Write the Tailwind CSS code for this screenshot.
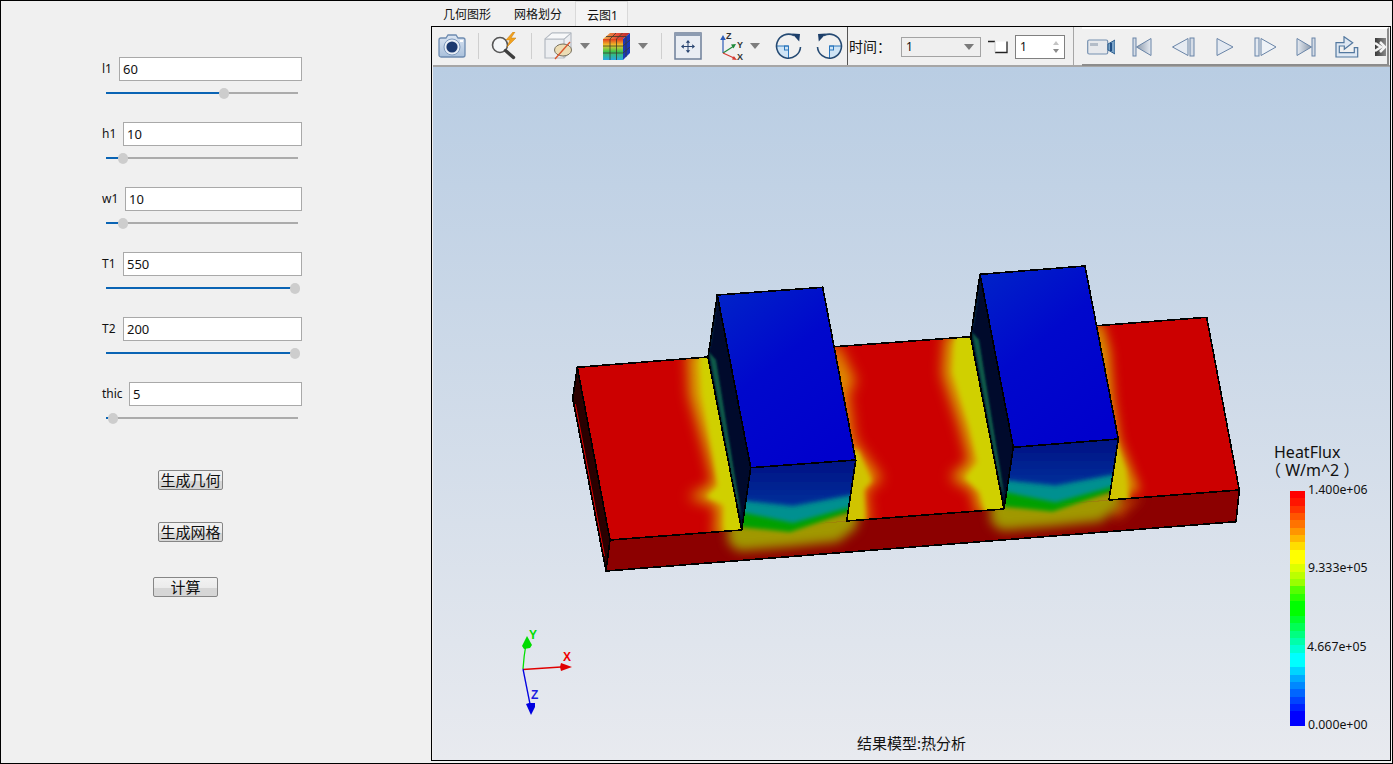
<!doctype html>
<html><head><meta charset="utf-8"><script src="https://cdn.jsdelivr.net/npm/@tailwindcss/browser@4"></script></head>
<body class="m-0 overflow-hidden">
<div class="flex w-[1393px] h-[764px] overflow-hidden bg-[#f0f0f0] border border-black font-['Noto_Sans','Noto_Sans_CJK_SC',sans-serif] text-[#111]">
  <!-- left panel -->
  <div class="w-[430px] shrink-0 pt-[56px] pl-[100px] flex flex-col items-start">
    <div class="h-[65px] w-[201px]">
      <div class="flex items-center h-6"><span class="text-[12px] w-[18px] pl-[1px]">l1</span><div class="flex-1 h-6 bg-white border border-[#a9a9a9] pl-[3px] text-[13px] leading-[22px]">60</div></div>
      <div class="flex items-center h-[10px] mt-[7px] ml-[5px] w-[192px]"><div class="h-[2px] w-[118px] bg-[#0a64b4]"></div><div class="w-[10px] h-[11px] -mx-[5px] rounded-full bg-[#cdcdcd] z-10"></div><div class="h-[2px] flex-1 bg-[#ababab]"></div></div>
    </div>
    <div class="h-[65px] w-[201px]">
      <div class="flex items-center h-6"><span class="text-[12px] w-[22px] pl-[1px]">h1</span><div class="flex-1 h-6 bg-white border border-[#a9a9a9] pl-[3px] text-[13px] leading-[22px]">10</div></div>
      <div class="flex items-center h-[10px] mt-[7px] ml-[5px] w-[192px]"><div class="h-[2px] w-[17px] bg-[#0a64b4]"></div><div class="w-[10px] h-[11px] -mx-[5px] rounded-full bg-[#cdcdcd] z-10"></div><div class="h-[2px] flex-1 bg-[#ababab]"></div></div>
    </div>
    <div class="h-[65px] w-[201px]">
      <div class="flex items-center h-6"><span class="text-[12px] w-[24px] pl-[1px]">w1</span><div class="flex-1 h-6 bg-white border border-[#a9a9a9] pl-[3px] text-[13px] leading-[22px]">10</div></div>
      <div class="flex items-center h-[10px] mt-[7px] ml-[5px] w-[192px]"><div class="h-[2px] w-[17px] bg-[#0a64b4]"></div><div class="w-[10px] h-[11px] -mx-[5px] rounded-full bg-[#cdcdcd] z-10"></div><div class="h-[2px] flex-1 bg-[#ababab]"></div></div>
    </div>
    <div class="h-[65px] w-[201px]">
      <div class="flex items-center h-6"><span class="text-[12px] w-[22px] pl-[1px]">T1</span><div class="flex-1 h-6 bg-white border border-[#a9a9a9] pl-[3px] text-[13px] leading-[22px]">550</div></div>
      <div class="flex items-center h-[10px] mt-[7px] ml-[5px] w-[192px]"><div class="h-[2px] w-[189px] bg-[#0a64b4]"></div><div class="w-[10px] h-[11px] -mx-[5px] rounded-full bg-[#cdcdcd] z-10"></div><div class="h-[2px] flex-1 bg-[#ababab]"></div></div>
    </div>
    <div class="h-[65px] w-[201px]">
      <div class="flex items-center h-6"><span class="text-[12px] w-[22px] pl-[1px]">T2</span><div class="flex-1 h-6 bg-white border border-[#a9a9a9] pl-[3px] text-[13px] leading-[22px]">200</div></div>
      <div class="flex items-center h-[10px] mt-[7px] ml-[5px] w-[192px]"><div class="h-[2px] w-[189px] bg-[#0a64b4]"></div><div class="w-[10px] h-[11px] -mx-[5px] rounded-full bg-[#cdcdcd] z-10"></div><div class="h-[2px] flex-1 bg-[#ababab]"></div></div>
    </div>
    <div class="h-[65px] w-[201px]">
      <div class="flex items-center h-6"><span class="text-[12px] w-[28px] pl-[1px]">thic</span><div class="flex-1 h-6 bg-white border border-[#a9a9a9] pl-[3px] text-[13px] leading-[22px]">5</div></div>
      <div class="flex items-center h-[10px] mt-[7px] ml-[5px] w-[192px]"><div class="h-[2px] w-[7px] bg-[#0a64b4]"></div><div class="w-[10px] h-[11px] -mx-[5px] rounded-full bg-[#cdcdcd] z-10"></div><div class="h-[2px] flex-1 bg-[#ababab]"></div></div>
    </div>
    <div class="mt-[23px] ml-[57px] w-[65px] h-[20px] border border-[#868686] rounded-[2px] bg-[linear-gradient(#f2f2f2_0%,#ebebeb_55%,#d6d6d6_55%,#d6d6d6_100%)] text-[15px] leading-[18px] text-center whitespace-nowrap">生成几何</div>
    <div class="mt-[32px] ml-[57px] w-[65px] h-[20px] border border-[#868686] rounded-[2px] bg-[linear-gradient(#f2f2f2_0%,#ebebeb_55%,#d6d6d6_55%,#d6d6d6_100%)] text-[15px] leading-[18px] text-center whitespace-nowrap">生成网格</div>
    <div class="mt-[35px] ml-[52px] w-[65px] h-[20px] border border-[#868686] rounded-[2px] bg-[linear-gradient(#f2f2f2_0%,#ebebeb_55%,#d6d6d6_55%,#d6d6d6_100%)] text-[15px] leading-[18px] text-center whitespace-nowrap">计算</div>
  </div>

  <!-- right panel -->
  <div class="flex-1 flex flex-col min-w-0 pr-[1px] pb-[2px]">
    <div class="h-[25px] flex items-end pl-[1px] text-[12px] shrink-0">
      <div class="w-[71px] pl-[11px] h-[24px] leading-[26px]">几何图形</div>
      <div class="w-[72px] pl-[11px] h-[24px] leading-[26px]">网格划分</div>
      <div class="w-[53px] h-[25px] pl-[11px] leading-[27px] border border-b-0 border-[#d9d9d9] bg-[#f4f4f4]">云图1</div>
    </div>
    <div class="flex-1 flex flex-col border border-black min-h-0 pl-[1px] bg-[#f0f0f0]">
      <!-- toolbar -->
      <div class="h-[40px] shrink-0 flex border-b-2 border-[#a6a6a6]">
        <div class="w-[415px] shrink-0 flex items-center border-r border-[#555]">
          <svg class="ml-[5px]" width="28" height="24" viewBox="0 0 28 24"><defs><linearGradient id="cam" x1="0" y1="0" x2="0" y2="1"><stop offset="0" stop-color="#dce6f3"/><stop offset="1" stop-color="#a9c0db"/></linearGradient></defs><path d="M3 4h5l2-3h8l2 3h5a2 2 0 0 1 2 2v15a2 2 0 0 1-2 2H3a2 2 0 0 1-2-2V6a2 2 0 0 1 2-2z" fill="url(#cam)" stroke="#6d8bb0" stroke-width="1.3"/><circle cx="14" cy="13" r="8" fill="#e9eff7" stroke="#7f9abd"/><circle cx="14" cy="13" r="5.6" fill="#1c3a70"/><rect x="22" y="6" width="3" height="2" fill="#fff"/></svg>
          <div class="ml-[12px] w-px h-[26px] bg-[#cfcfcf]"></div>
          <svg class="ml-[12px]" width="29" height="28" viewBox="0 0 29 28"><circle cx="9" cy="13" r="7.5" fill="#f4f6f8" stroke="#555" stroke-width="1.6"/><path d="M14.500 18.500l8 7" stroke="#3e3e3e" stroke-width="3.4" stroke-linecap="round"/><path d="M22 0l-7 8h4l-3 7 9-9h-5l4-6z" fill="#f2a21e" stroke="#c77d10" stroke-width=".5"/></svg>
          <div class="ml-[11px] w-px h-[26px] bg-[#cfcfcf]"></div>
          <svg class="ml-[12px]" width="28" height="30" viewBox="0 0 28 30"><path d="M1 8l7-6h19v18l-7 7H1z" fill="#eceef1" stroke="#b4bac2" stroke-width="1.2"/><path d="M1 8h19v19M20 8l7-6" fill="none" stroke="#b4bac2" stroke-width="1.2"/><path d="M1 8l7-6h19l-7 6z" fill="#f7f8f9" stroke="#b4bac2"/><ellipse cx="19" cy="19" rx="8.500" ry="6" fill="#ecdcb4" stroke="#77705c"/><path d="M11 28L26 11" stroke="#d9542b" stroke-width="1.3"/></svg>
          <svg class="ml-[8px]" width="10" height="6" viewBox="0 0 10 6"><path d="M0 0h10L5 6z" fill="#7d7d7d"/></svg>
          <svg class="ml-[13px]" width="27" height="30" viewBox="0 0 27 30"><defs><linearGradient id="rb" x1="0" y1="0" x2="0" y2="1"><stop offset="0" stop-color="#e33b1f"/><stop offset=".3" stop-color="#f0c92a"/><stop offset=".6" stop-color="#3cc450"/><stop offset="1" stop-color="#27a7e8"/></linearGradient><linearGradient id="rb2" x1="0" y1="0" x2="1" y2="0"><stop offset="0" stop-color="#e9b44a"/><stop offset=".5" stop-color="#e8503a"/><stop offset="1" stop-color="#b8272b"/></linearGradient></defs><path d="M0 8h20v21H0z" fill="url(#rb)"/><path d="M0 8l7-6h20l-7 6z" fill="url(#rb2)"/><path d="M20 8l7-6v20l-7 7z" fill="#1b39b8"/><path d="M7 8v21M13.500 8v21M0 15h20M0 22h20M7 8l6-6M13.500 8l6-6M3 5.500h20M23 5v21M20 15l7-6M20 22l7-6" stroke="#3c3c2c" stroke-width=".8" fill="none"/></svg>
          <svg class="ml-[8px]" width="10" height="6" viewBox="0 0 10 6"><path d="M0 0h10L5 6z" fill="#7d7d7d"/></svg>
          <div class="ml-[13px] w-px h-[26px] bg-[#cfcfcf]"></div>
          <svg class="ml-[12px]" width="28" height="28" viewBox="0 0 28 28"><rect x="1" y="1" width="26" height="26" fill="#e9edf3" stroke="#6e7f99" stroke-width="1.500"/><rect x="1" y="1" width="26" height="3" fill="#8d9cb2"/><path d="M14 10v9M9.500 14.500h9" stroke="#27436f" stroke-width="1"/><path d="M14 8l-2.200 2.800h4.400zM14 21l-2.200-2.800h4.400zM7 14.500l2.800-2.200v4.400zM21 14.500l-2.800-2.200v4.400z" fill="#27436f"/></svg>
          <svg class="ml-[16px]" width="28" height="30" viewBox="0 0 28 30"><path d="M5 22V8" stroke="#2c5cb8" stroke-width="1.200"/><path d="M5 4l-2.800 5h5.600z" fill="#2c5cb8"/><path d="M5 22l11-7" stroke="#1f8a3a" stroke-width="1.200"/><path d="M18 13l-5 0.500 2.500 4z" fill="#1f8a3a"/><path d="M5 22l11 5" stroke="#d63a32" stroke-width="1.200"/><path d="M19 29l-5-.5 1.800-3.500z" fill="#d63a32"/><text x="8" y="8" font-size="9" font-family="Liberation Sans" font-weight="700" fill="#333">Z</text><text x="19" y="17" font-size="9" font-family="Liberation Sans" font-weight="700" fill="#333">Y</text><text x="19" y="29" font-size="9" font-family="Liberation Sans" font-weight="700" fill="#333">X</text></svg>
          <svg class="ml-[4px]" width="10" height="6" viewBox="0 0 10 6"><path d="M0 0h10L5 6z" fill="#7d7d7d"/></svg>
          <svg class="ml-[15px]" width="27" height="28" viewBox="0 0 27 28"><path d="M1.500 14h12v12A12 12 0 0 1 1.500 14z" fill="#cfe4f5"/><rect x="9.500" y="14" width="4" height="4" fill="none" stroke="#2a76bd"/><path d="M1.500 14h12v12" fill="none" stroke="#2a76bd"/><path d="M19 3.500A12 12 0 1 0 25.500 15" fill="none" stroke="#254a73" stroke-width="1.600"/><path d="M17 1.500l8 .5-.8 7.500z" fill="#1d3f6a"/></svg>
          <svg class="ml-[14px] scale-x-[-1]" width="27" height="28" viewBox="0 0 27 28"><path d="M1.500 14h12v12A12 12 0 0 1 1.500 14z" fill="#cfe4f5"/><rect x="9.500" y="14" width="4" height="4" fill="none" stroke="#2a76bd"/><path d="M1.500 14h12v12" fill="none" stroke="#2a76bd"/><path d="M19 3.500A12 12 0 1 0 25.500 15" fill="none" stroke="#254a73" stroke-width="1.600"/><path d="M17 1.500l8 .5-.8 7.500z" fill="#1d3f6a"/></svg>
        </div>
        <div class="w-[226px] shrink-0 flex items-center border-r border-[#a6a6a6] pt-[2px]">
          <span class="ml-[1px] w-[36px] whitespace-nowrap text-[14px] leading-[20px]">时间：</span>
          <div class="ml-[16px] w-[80px] h-[20px] border border-[#a3a3a3] bg-[#efefef] flex items-center justify-between pl-[4px] pr-[6px] text-[12px]"><span>1</span><svg width="10" height="6" viewBox="0 0 10 6"><path d="M0 0h10L5 6z" fill="#7a7a7a"/></svg></div>
          <svg class="ml-[7px]" width="20" height="14" viewBox="0 0 20 14"><path d="M0 1.500h7" stroke="#222" stroke-width="1.500"/><path d="M7 1.500h12v12H7" fill="#fff" stroke="none"/><path d="M7 12.500h12V1.500" fill="none" stroke="#222" stroke-width="1.300"/><path d="M7 1.500v11" stroke="#ccc"/></svg>
          <div class="ml-[7px] w-[50px] h-[24px] bg-white border border-[#808080] flex items-center justify-between pl-[4px] pr-[5px] text-[12px]"><span>1</span><svg width="6" height="14" viewBox="0 0 6 14"><path d="M0 5l3-4 3 4z" fill="#c4c4c4"/><path d="M0 9l3 4 3-4z" fill="#8a8a8a"/></svg></div>
        </div>
        <div class="ml-[8px] w-[307px] shrink-0 flex items-center border-t-[2px] border-t-white border-r-2 border-r-[#8c8c8c] border-b-[2px] border-b-[#8c8c8c] -mb-[1px] h-[39px]">
          <svg class="ml-[5px]" width="28" height="16" viewBox="0 0 28 16"><rect x=".7" y="1" width="20" height="14" rx="1.500" fill="#e6e8ec" stroke="#7590b0" stroke-width="1.200"/><rect x="3" y="4" width="8" height="3" fill="#b3bcc8"/><path d="M21 5l7-4v14l-7-4z" fill="#7aa3c7" stroke="#2b5c8c"/><rect x="23" y="4" width="2" height="8" fill="#1f4e85"/></svg>
          <svg class="ml-[17px]" width="20" height="20" viewBox="0 0 20 20"><defs><linearGradient id="pg" x1="0" y1="0" x2="1" y2="0"><stop offset="0" stop-color="#8a98aa"/><stop offset="1" stop-color="#e6ebf2"/></linearGradient><linearGradient id="pg2" x1="0" y1="0" x2="1" y2="0"><stop offset="0" stop-color="#e6ebf2"/><stop offset="1" stop-color="#8a98aa"/></linearGradient></defs><rect x="1" y="1" width="3" height="18" fill="#d5dce6" stroke="#6984a7"/><path d="M19 1.500v17L4.500 10z" fill="url(#pg)" stroke="#6984a7"/></svg>
          <svg class="ml-[19px]" width="24" height="20" viewBox="0 0 24 20"><path d="M17 1.500v17L1.500 10z" fill="#e6ebf2" stroke="#6984a7"/><rect x="19" y="1" width="4" height="18" fill="#d5dce6" stroke="#6984a7"/></svg>
          <svg class="ml-[21px]" width="18" height="20" viewBox="0 0 18 20"><path d="M1 1.500v17L17 10z" fill="#e3e9f1" stroke="#6984a7"/></svg>
          <svg class="ml-[20px]" width="23" height="20" viewBox="0 0 23 20"><rect x="1" y="1" width="4" height="18" fill="#e3e9f1" stroke="#6984a7"/><path d="M7 1.500v17L22 10z" fill="#eef2f7" stroke="#6984a7"/></svg>
          <svg class="ml-[19px]" width="20" height="20" viewBox="0 0 20 20"><path d="M1 1.500v17L15.500 10z" fill="url(#pg2)" stroke="#6984a7"/><rect x="16" y="1" width="3" height="18" fill="#d5dce6" stroke="#6984a7"/></svg>
          <svg class="ml-[19px]" width="24" height="22" viewBox="0 0 24 22"><path d="M1 21V6.700h8V.7l8.700 6-8.400 6.600V10h-5v6.700h15v-5h3.400V21z" fill="#dfe8f3" stroke="#53789f" stroke-width="1.200"/></svg>
          <svg class="ml-[16px]" width="11" height="18" viewBox="0 0 11 18"><defs><linearGradient id="ov" x1="0" y1="0" x2="1" y2="0"><stop offset="0" stop-color="#3a3a3a"/><stop offset="1" stop-color="#8a8a8a"/></linearGradient></defs><rect width="11" height="18" fill="url(#ov)"/><path d="M0 5l6 4-6 4M5 4l5 5-5 5" fill="none" stroke="#f4f4f4" stroke-width="2.500"/></svg>
        </div>
      </div>
      <!-- canvas -->
      <div class="relative flex-1 min-h-0 bg-[linear-gradient(#b9cde3,#e8eaef)] overflow-hidden">
        <svg class="absolute left-0 top-0" width="957" height="693" viewBox="433 67 957 693">
          <defs>
            <filter id="b7" x="-60%" y="-30%" width="220%" height="160%"><feGaussianBlur stdDeviation="7"/></filter>
            <filter id="b5" x="-30%" y="-60%" width="160%" height="220%"><feGaussianBlur stdDeviation="5.500"/></filter>
            <filter id="b3" x="-60%" y="-30%" width="220%" height="160%"><feGaussianBlur stdDeviation="2.500"/></filter>
            <filter id="b2" x="-30%" y="-30%" width="160%" height="160%"><feGaussianBlur stdDeviation="2"/></filter>
            <filter id="b1" x="-50%" y="-10%" width="200%" height="120%"><feGaussianBlur stdDeviation="1.200"/></filter>
            <linearGradient id="topb" x1="0.1" y1="0" x2="0.7" y2="1"><stop offset="0" stop-color="#0022c8"/><stop offset=".45" stop-color="#0008cc"/><stop offset="1" stop-color="#0000cc"/></linearGradient>
            <linearGradient id="navy" x1="0" y1="0" x2="0" y2="1"><stop offset="0" stop-color="#000a80"/><stop offset="1" stop-color="#00309a"/></linearGradient>
            <clipPath id="cL"><polygon points="577.300,367.300 708,357 741.700,530 610,540"/></clipPath>
            <clipPath id="cM"><polygon points="835,346.700 970.700,336.700 1004,509 846.700,521"/></clipPath>
            <clipPath id="cR"><polygon points="1096.700,325.700 1206.700,317.300 1239.300,490 1109,500"/></clipPath>
            <clipPath id="cF"><polygon points="610,540 1239.300,490 1236,521.700 606,571"/><polygon points="750.700,467.700 855.700,460 846.700,521 741.700,530"/><polygon points="1013.300,447.300 1118.300,439 1109,500 1004,509"/></clipPath>
            <clipPath id="cW1"><polygon points="717.300,295 708,357 741.700,530 750.700,467.700"/></clipPath>
            <clipPath id="cW2"><polygon points="980,274.300 970.700,336.700 1004,509 1013.300,447.300"/></clipPath>
            <g id="chev">
              <polygon filter="url(#b5)" fill="#a09800" points="728,520 860,506 856,528 838,542 790,547 738,551 728,542"/>
              <polygon filter="url(#b2)" fill="#00a000" points="738,495 858,482 858,509 790,532 740,527"/>
              <polygon filter="url(#b2)" fill="#009090" points="738,480 858,470 858,505 793,523 740,512"/>
              <polygon filter="url(#b2)" fill="url(#navy)" points="738,455 862,450 862,493 793,506 738,500"/>
            </g>
          </defs>
          <!-- side sliver -->
          <polygon points="577.300,367.300 572.700,398.300 606,571 610,540" fill="#2a0000"/>
          <line x1="575.300" y1="404" x2="604.500" y2="556" stroke="#e00000" stroke-width="1"/>
          <!-- top faces -->
          <polygon points="577.300,367.300 708,357 741.700,530 610,540" fill="#cc0000"/>
          <polygon points="835,346.700 970.700,336.700 1004,509 846.700,521" fill="#cc0000"/>
          <polygon points="1096.700,325.700 1206.700,317.300 1239.300,490 1109,500" fill="#cc0000"/>
          <g clip-path="url(#cL)">
            <polygon filter="url(#b7)" fill="#d8b000" points="688,350 720,350 750,535 715,540 717,505 688,497 714,484 707,455 690,395"/>
            <polygon filter="url(#b3)" fill="#d0d000" points="699,350 722,350 752,538 724,542 724,505 706,497 718,486 713,455 702,395"/>
          </g>
          <g clip-path="url(#cM)">
            <polygon filter="url(#b7)" fill="#e09000" points="828,345 838,345 856,382 848,392 854,440 882,479 866,490 870,525 840,525"/>
            <polygon filter="url(#b3)" fill="#d0c400" points="848,450 858,450 872,481 864,490 866,525 842,525"/>
            <polygon filter="url(#b7)" fill="#d8b000" points="946,334 980,330 1012,515 978,515 973,490 950,477 970,462 961,428 943,374"/>
            <polygon filter="url(#b3)" fill="#d0d000" points="955,334 980,330 1012,515 986,515 980,492 965,478 978,462 970,428 953,372"/>
          </g>
          <g clip-path="url(#cR)">
            <polygon filter="url(#b5)" fill="#d89000" points="1090,326 1102,322 1110,350 1114,400 1120,440 1130,465 1140,490 1105,505"/>
            <polygon filter="url(#b3)" fill="#d0c400" points="1105,440 1116,440 1126,470 1130,505 1105,505"/>
          </g>
          <!-- fronts -->
          <g clip-path="url(#cF)">
            <rect x="600" y="430" width="650" height="150" fill="#8c0000"/>
            <polygon filter="url(#b5)" fill="#b84000" points="1105,500 1142,496 1118,520"/>
            <use href="#chev"/>
            <use href="#chev" transform="translate(262.600,-20.400)"/>
          </g>
          <!-- walls -->
          <polygon points="717.300,295 708,357 741.700,530 750.700,467.700" fill="#000a2c"/>
          <g clip-path="url(#cW1)"><polygon filter="url(#b1)" fill="#0f5a48" points="709,352 716,360 742,520 736,500"/><polygon filter="url(#b1)" fill="#0e6a70" points="707,358 718,295 711,340"/></g>
          <polygon points="980,274.300 970.700,336.700 1004,509 1013.300,447.300" fill="#000a2c"/>
          <g clip-path="url(#cW2)"><polygon filter="url(#b1)" fill="#0f5a48" points="972,332 979,340 1005,500 999,480"/><polygon filter="url(#b1)" fill="#0e6a70" points="970,338 981,275 974,320"/></g>
          <!-- block tops -->
          <polygon points="717.300,295 822.700,287.300 855.700,460 750.700,467.700" fill="url(#topb)"/>
          <polygon points="980,274.300 1085,266 1118.300,439 1013.300,447.300" fill="url(#topb)"/>
          <!-- edges -->
          <g fill="none" stroke="#000" stroke-width="1.600" shape-rendering="crispEdges">
            <polyline points="708,357 577.300,367.300 610,540 741.700,530"/>
            <polyline points="577.300,367.300 572.700,398.300 606,571 1236,521.700 1239.300,490 1109,500"/>
            <line x1="610" y1="540" x2="606" y2="571"/>
            <polygon points="717.300,295 822.700,287.300 855.700,460 750.700,467.700"/>
            <polygon points="980,274.300 1085,266 1118.300,439 1013.300,447.300"/>
            <polyline points="717.300,295 708,357 741.700,530 750.700,467.700"/>
            <polyline points="980,274.300 970.700,336.700 1004,509 1013.300,447.300"/>
            <polyline points="855.700,460 846.700,521 1004,509"/>
            <polyline points="1118.300,439 1109,500"/>
            <line x1="835" y1="346.700" x2="970.700" y2="336.700"/>
            <polyline points="1096.700,325.700 1206.700,317.300 1239.300,490"/>
          </g>
          <!-- axes -->
          <g fill="none" stroke-width="1.300">
            <path d="M523 669q1-14 3-25" stroke="#00e000"/><path d="M523 669.500l38-2.500" stroke="#e00000"/><path d="M523 669l7 35" stroke="#0000e0"/>
          </g>
          <path d="M527 636l-5 10 2 3 6-1 2-3z" fill="#00dc00"/>
          <path d="M572 667l-11-4-1 4 1 4z" fill="#e00000"/>
          <path d="M531 715l-5-11 3-1 6 0 0 4z" fill="#0000e0"/>
          <text x="529" y="639" fill="#00dc00" font-size="12" font-weight="700" font-family="Liberation Sans">Y</text>
          <text x="563" y="661" fill="#f00000" font-size="12" font-weight="700" font-family="Liberation Sans">X</text>
          <text x="531" y="699" fill="#1a1ae0" font-size="12" font-weight="700" font-family="Liberation Sans">Z</text>
        </svg>
        <!-- legend -->
        <div class="absolute left-[841px] top-[376px] text-[16px] leading-[18px] whitespace-nowrap">HeatFlux</div>
        <div class="absolute left-[832px] top-[394px] text-[16px] leading-[18px] whitespace-nowrap">（ W/m^2 ）</div>
        <div class="absolute left-[857px] top-[424px] w-[15px] h-[235px] flex flex-col">
          <div class="flex-1" style="background:hsl(0,100%,50%)"></div><div class="flex-1" style="background:hsl(5,100%,50%)"></div><div class="flex-1" style="background:hsl(12,100%,50%)"></div><div class="flex-1" style="background:hsl(20,100%,50%)"></div><div class="flex-1" style="background:hsl(27,100%,50%)"></div><div class="flex-1" style="background:hsl(35,100%,50%)"></div><div class="flex-1" style="background:hsl(43,100%,50%)"></div><div class="flex-1" style="background:hsl(52,100%,50%)"></div><div class="flex-1" style="background:hsl(60,100%,50%)"></div><div class="flex-1" style="background:hsl(60,100%,50%)"></div><div class="flex-1" style="background:hsl(68,100%,50%)"></div><div class="flex-1" style="background:hsl(76,100%,50%)"></div><div class="flex-1" style="background:hsl(84,100%,50%)"></div><div class="flex-1" style="background:hsl(100,100%,50%)"></div><div class="flex-1" style="background:hsl(110,100%,50%)"></div><div class="flex-1" style="background:hsl(120,100%,50%)"></div><div class="flex-1" style="background:hsl(120,100%,50%)"></div><div class="flex-1" style="background:hsl(130,100%,50%)"></div><div class="flex-1" style="background:hsl(140,100%,50%)"></div><div class="flex-1" style="background:hsl(150,100%,50%)"></div><div class="flex-1" style="background:hsl(160,100%,50%)"></div><div class="flex-1" style="background:hsl(170,100%,50%)"></div><div class="flex-1" style="background:hsl(180,100%,50%)"></div><div class="flex-1" style="background:hsl(180,100%,50%)"></div><div class="flex-1" style="background:hsl(190,100%,50%)"></div><div class="flex-1" style="background:hsl(200,100%,50%)"></div><div class="flex-1" style="background:hsl(208,100%,50%)"></div><div class="flex-1" style="background:hsl(216,100%,50%)"></div><div class="flex-1" style="background:hsl(224,100%,50%)"></div><div class="flex-1" style="background:hsl(232,100%,50%)"></div><div class="flex-1" style="background:hsl(240,100%,50%)"></div><div class="flex-1" style="background:hsl(240,100%,50%)"></div>
        </div>
        <div class="absolute left-[875px] top-[415px] text-[12.300px] leading-[16px]">1.400e+06</div>
        <div class="absolute left-[875px] top-[493px] text-[12.300px] leading-[16px]">9.333e+05</div>
        <div class="absolute left-[874px] top-[572px] text-[12.300px] leading-[16px]">4.667e+05</div>
        <div class="absolute left-[875px] top-[650px] text-[12.300px] leading-[16px]">0.000e+00</div>
        <div class="absolute left-[424px] top-[667px] text-[15px] leading-[18px] whitespace-nowrap">结果模型:热分析</div>
      </div>
    </div>
  </div>
</div>
</body></html>
